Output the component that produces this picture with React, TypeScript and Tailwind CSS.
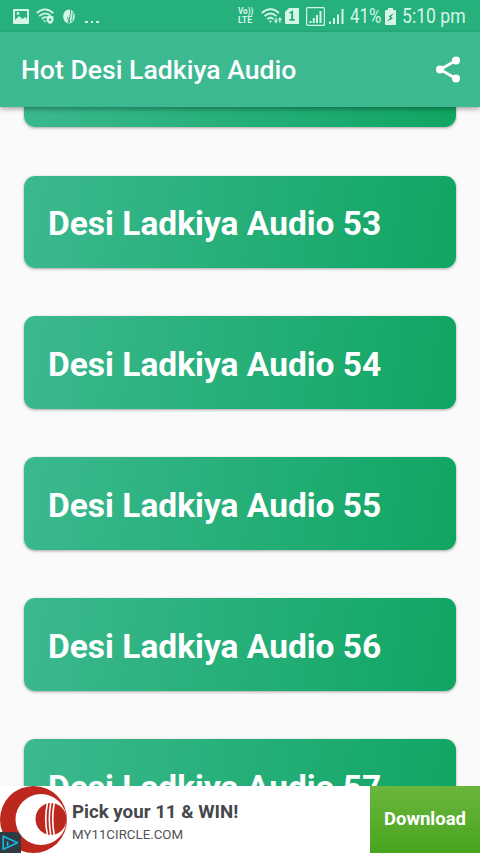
const tracks = [53, 54, 55, 56, 57];

const ImageIcon = () => (
  <svg className="ml-[13px] h-[15px] w-4" viewBox="0 0 16 15">
    <path
      fill="currentColor"
      fillRule="evenodd"
      d="M1 0h14a1 1 0 0 1 1 1v13a1 1 0 0 1-1 1H1a1 1 0 0 1-1-1V1a1 1 0 0 1 1-1Zm1 2v9l4-4 3.5 3L12 8l2 2V2H2Zm3 1a1.4 1.4 0 1 1 0 2.8A1.4 1.4 0 0 1 5 3Z"
    />
  </svg>
);

const WifiSecureIcon = () => (
  <svg className="ml-[7px] h-4 w-[18px]" viewBox="0 0 18 16">
    <g fill="none" stroke="currentColor" strokeWidth="1.8">
      <path d="M.7 5.2Q9-2.5 17.3 5.2" />
      <path d="M3.2 8.2Q9 2.8 14.5 7.6" />
      <path d="M5.8 11Q8 8.6 10.5 9.3" />
    </g>
    <path fill="currentColor" d="m9 12 .8 3L7 12.6Z" />
    <path
      fill="currentColor"
      fillRule="evenodd"
      d="m14 7.5 3.5 1v3.2c0 2-1.5 3.3-3.5 4.3-2-1-3.5-2.3-3.5-4.3V8.5ZM14 10.5a1.2 1.2 0 1 0 0 2.4 1.2 1.2 0 0 0 0-2.4Z"
    />
  </svg>
);

const BallIcon = () => (
  <svg className="ml-[9px] h-[15px] w-3" viewBox="0 0 12 15">
    <ellipse cx="6" cy="7.5" rx="5.8" ry="7" fill="currentColor" />
    <g fill="none" stroke="#26b17c" strokeWidth="1">
      <path d="M4.5 8q1.500 3 .5 6M7.5 1c1 4-2 7-1 13M10 3c.5 3-1.5 6-1 10" />
    </g>
  </svg>
);

const WifiIcon = () => (
  <svg className="ml-[7px] h-4 w-[21px]" viewBox="0 0 21 16">
    <g fill="none" stroke="currentColor" strokeWidth="1.8">
      <path d="M.7 5Q9.5-2.7 18 5" />
      <path d="M3.5 8.2Q9.5 2.7 15.3 8.2" />
      <path d="M6.2 11.2Q9.5 8.2 12.6 11.2" />
    </g>
    <path fill="currentColor" d="M7.8 12.8H11l-1.6 2.2Z" />
    <path fill="currentColor" d="M14.3 10h1.4v2.5H17l-2 3-2-3h1.3ZM18.2 14.5V12h-1.300l2-3 2 3h-1.300v2.500Z" />
  </svg>
);

const SimIcon = () => (
  <svg className="ml-[3px] h-4 w-[14px]" viewBox="0 0 14 16">
    <path fill="currentColor" d="M4 0h9q1 0 1 1v14q0 1-1 1H1q-1 0-1-1V4Z" />
    <path fill="none" stroke="#26a875" strokeWidth="1.8" d="m4.5 5 2.7-1.2V11M4.5 11.8h5.2" />
  </svg>
);

const BoxedSignalIcon = () => (
  <svg className="ml-[7px] h-[19px] w-[19px]" viewBox="0 0 19 19">
    <rect x=".6" y=".6" width="17.8" height="17.8" rx="1" fill="none" stroke="currentColor" strokeWidth="1.2" />
    <path fill="currentColor" d="M3.5 14h2v2h-2ZM6.8 11h2v5h-2ZM10 8h2v8h-2ZM13.5 4h2v12h-2Z" />
  </svg>
);

const SignalIcon = () => (
  <svg className="ml-[3px] h-[15px] w-4" viewBox="0 0 16 15">
    <path fill="currentColor" d="M1 12.5h2V15H1ZM5 9h2v6H5ZM9 5.5h2V15H9ZM13.5 0h2v15h-2Z" />
  </svg>
);

const BatteryIcon = () => (
  <svg className="ml-[4px] h-[17px] w-[11px]" viewBox="0 0 11 17">
    <path fill="currentColor" d="M3 0h5v2h2q1 0 1 1v13q0 1-1 1H1q-1 0-1-1V3q0-1 1-1h2Z" />
    <path fill="#1d9467" d="M9 5 3.5 8.5l2 1-3.5 4 6-3.3-2.2-1.1Z" />
  </svg>
);

const StatusBar = () => (
  <div className="flex h-8 shrink-0 items-center bg-[#26b17c] text-[#d5f5e8]">
    <ImageIcon />
    <WifiSecureIcon />
    <BallIcon />
    <div className="mt-3 ml-[10px] flex gap-[3px]">
      <span className="size-[2.5px] bg-current" />
      <span className="size-[2.5px] bg-current" />
      <span className="size-[2.5px] bg-current" />
    </div>
    <div className="ml-[139px] w-4 text-[9px] leading-[9px] font-bold whitespace-nowrap">
      <div className="origin-left scale-x-[.9]">Vo))</div>
      <div className="origin-left scale-x-[.98]">LTE</div>
    </div>
    <WifiIcon />
    <SimIcon />
    <BoxedSignalIcon />
    <SignalIcon />
    <span className="ml-[6px] w-[31px] text-[20px] leading-8 whitespace-nowrap">
      <span className="inline-block origin-left scale-x-[.84]">41%</span>
    </span>
    <BatteryIcon />
    <span className="ml-[6px] w-16 text-[20px] leading-8 whitespace-nowrap">
      <span className="inline-block origin-left scale-x-[.88]">5:10 pm</span>
    </span>
  </div>
);

const ShareIcon = () => (
  <svg className="h-[27px] w-6" viewBox="0 0 24 27">
    <path d="M20 4.5 4 13.5l16 9" fill="none" stroke="white" strokeWidth="2.7" />
    <g fill="white">
      <circle cx="20" cy="4.5" r="4" />
      <circle cx="4" cy="13.5" r="4" />
      <circle cx="20" cy="22.5" r="4" />
    </g>
  </svg>
);

const AppBar = () => (
  <header className="z-10 flex h-[75px] shrink-0 items-center justify-between bg-[#3cb991] pr-5 pl-[21px] shadow-[0_2px_5px_rgba(0,0,0,0.35)]">
    <h1 className="mt-px text-[26.6px] font-medium text-white">Hot Desi Ladkiya Audio</h1>
    <ShareIcon />
  </header>
);

const TrackCard = ({ number }: { number: number }) => (
  <li className="flex h-[92.6px] shrink-0 items-center rounded-[11px] bg-[linear-gradient(100deg,#3cb98f,#10a562)] px-6 text-[33.5px] font-bold text-white shadow-[0_1px_3px_rgba(0,0,0,0.35)]">
    <span className="mt-[5px] leading-10 whitespace-nowrap">Desi Ladkiya Audio {number}</span>
  </li>
);

const AdBanner = () => (
  <footer className="z-10 flex h-[67px] shrink-0 bg-white">
    <div className="relative w-[67px]">
      <svg className="h-[67px] w-[67px]" viewBox="0 0 67 67">
        <circle cx="33.5" cy="33.5" r="33.5" fill="#bd281e" />
        <circle cx="41" cy="33.5" r="25.5" fill="white" />
        <ellipse cx="51" cy="33" rx="15.5" ry="16" fill="#bd281e" />
        <g fill="none" stroke="white" strokeWidth="1.6">
          <path d="M47.5 17q-3.5 16 0 32M50.8 17q-3 16 0 32M54.2 17q-3 16 0 32" />
        </g>
      </svg>
      <svg className="absolute bottom-0 left-0 h-[21px] w-[21px]" viewBox="0 0 21 21">
        <path d="M0 0h15q6 0 6 6v15H0Z" fill="#303b41" />
        <path d="M3.2 4.2v13l14.3-6.5Z" fill="none" stroke="#19b5df" strokeWidth="1.7" strokeLinejoin="round" />
        <path d="M7.5 9.5V14" stroke="#19b5df" strokeWidth="1.7" />
      </svg>
    </div>
    <div className="flex flex-1 flex-col pt-[14px] pl-[5px] whitespace-nowrap">
      <span className="text-[18.7px] leading-6 font-bold text-[#44474b]">Pick your 11 &amp; WIN!</span>
      <span className="text-[13.3px] leading-[22px] text-[#505356]">MY11CIRCLE.COM</span>
    </div>
    <button className="w-[110px] bg-linear-to-b from-[#6bb63c] to-[#48a51c] text-[18.5px] font-bold text-white">
      Download
    </button>
  </footer>
);

export default function App() {
  return (
    <div className="flex h-[853px] w-[480px] flex-col overflow-hidden bg-[#fafafa] font-[Roboto,sans-serif]">
      <StatusBar />
      <AppBar />
      <main className="min-h-0 flex-1 overflow-hidden px-6">
        <ul className="-mt-[72.2px] flex flex-col gap-[48.2px]">
          {/* scrolled away, only its bottom edge shows under the app bar */}
          <li className="h-[92.6px] shrink-0 rounded-[11px] bg-[linear-gradient(100deg,#3cb98f,#10a562)] shadow-[0_1px_3px_rgba(0,0,0,0.35)]" />
          {tracks.map((number) => (
            <TrackCard key={number} number={number} />
          ))}
        </ul>
      </main>
      <AdBanner />
    </div>
  );
}
